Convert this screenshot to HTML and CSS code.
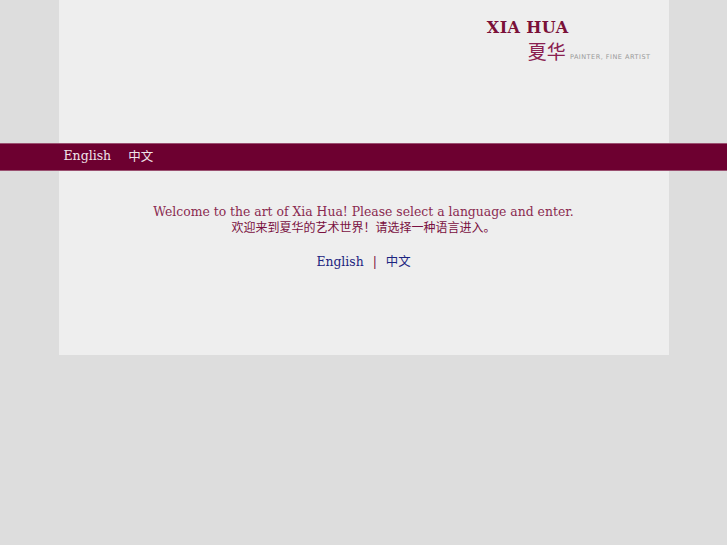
FILE: index.html
```html
<!DOCTYPE html>
<html lang="zh">
<head>
<meta charset="utf-8">
<title>Xia Hua</title>
<link rel="stylesheet" href="styles.css">
</head>
<body>
<div class="page head">
  <div class="logo">
    <div class="logo-name">XIA HUA</div>
    <div class="logo-sub"><span class="logo-cn">夏华</span><span class="logo-tag">PAINTER, FINE ARTIST</span></div>
  </div>
</div>
<div class="band">
  <div class="band-inner">
    <a class="nav-link" href="#">English</a>
    <a class="nav-link" href="#">中文</a>
  </div>
</div>
<div class="page content">
  <p class="welcome">Welcome to the art of Xia Hua! Please select a language and enter.</p>
  <p class="welcome-cn">欢迎来到夏华的艺术世界！请选择一种语言进入。</p>
  <p class="langs"><a href="#" class="lang">English</a><span class="sep">|</span><a href="#" class="lang">中文</a></p>
</div>
</body>
</html>
```
FILE: styles.css
```css
html, body {
  margin: 0;
  padding: 0;
  background: #dddddd;
  font-family: "DejaVu Serif", "Noto Sans CJK SC", serif;
}
.page {
  width: 610px;
  margin: 0 auto;
  background: #eeeeee;
}
.head {
  height: 143px;
  display: flex;
  justify-content: flex-end;
}
.logo {
  margin-top: 18px;
  margin-right: 18px;
  display: flex;
  flex-direction: column;
  align-items: flex-end;
}
.logo-name {
  font-family: "DejaVu Serif", serif;
  font-weight: bold;
  font-size: 16px;
  letter-spacing: 0.4px;
  color: #7a1038;
  margin-right: 82px;
}
.logo-sub {
  display: flex;
  align-items: flex-end;
  margin-top: 3px;
}
.logo-cn {
  font-family: "Noto Sans CJK SC", sans-serif;
  font-size: 19px;
  line-height: 22px;
  color: #8a2050;
}
.logo-tag {
  font-family: "DejaVu Sans", sans-serif;
  font-size: 6.5px;
  letter-spacing: 0.5px;
  color: #999999;
  margin-left: 4px;
  margin-bottom: 1px;
}
.band {
  background: #6d0030;
  border-top: 1px solid #9a5070;
  border-bottom: 1px solid #9a5070;
  box-sizing: border-box;
  height: 28px;
}
.band-inner {
  width: 610px;
  margin: 0 auto;
  padding-left: 5px;
  padding-bottom: 3px;
  box-sizing: border-box;
  display: flex;
  gap: 17px;
  align-items: center;
  height: 100%;
}
.nav-link {
  color: #f0e4ea;
  text-decoration: none;
  font-size: 12.5px;
}
.content {
  height: 184px;
  padding-top: 33px;
  box-sizing: border-box;
  text-align: center;
}
.welcome {
  margin: 0;
  font-size: 12.4px;
  line-height: 16px;
  color: #8a2a50;
}
.welcome-cn {
  margin: 0;
  font-size: 12px;
  line-height: 17px;
  color: #7a1040;
}
.langs {
  margin: 17px 0 0;
  font-size: 12.4px;
  line-height: 16px;
}
.lang {
  color: #1c2480;
  text-decoration: none;
}
.sep {
  color: #7a1040;
  margin: 0 9px;
}
```
